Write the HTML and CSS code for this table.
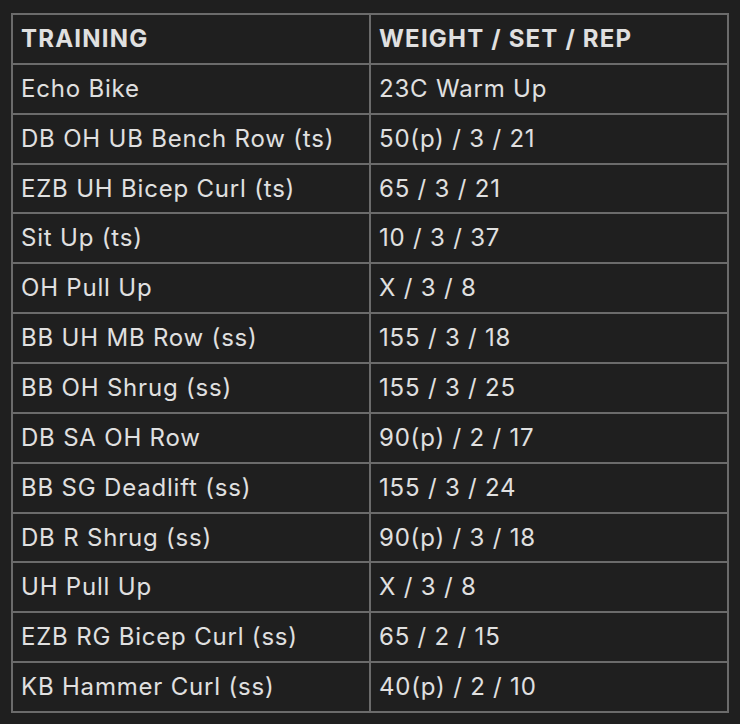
FILE: index.html
```html
<!DOCTYPE html>
<html lang="en">
<head>
<meta charset="utf-8">
<title>Training</title>
<link rel="stylesheet" href="styles.css">
</head>
<body>
<table class="plan">
  <thead>
    <tr><th>TRAINING</th><th>WEIGHT / SET / REP</th></tr>
  </thead>
  <tbody>
    <tr><td>Echo Bike</td><td>23C Warm Up</td></tr>
    <tr><td>DB OH UB Bench Row (ts)</td><td>50(p) / 3 / 21</td></tr>
    <tr><td>EZB UH Bicep Curl (ts)</td><td>65 / 3 / 21</td></tr>
    <tr><td>Sit Up (ts)</td><td>10 / 3 / 37</td></tr>
    <tr><td>OH Pull Up</td><td>X / 3 / 8</td></tr>
    <tr><td>BB UH MB Row (ss)</td><td>155 / 3 / 18</td></tr>
    <tr><td>BB OH Shrug (ss)</td><td>155 / 3 / 25</td></tr>
    <tr><td>DB SA OH Row</td><td>90(p) / 2 / 17</td></tr>
    <tr><td>BB SG Deadlift (ss)</td><td>155 / 3 / 24</td></tr>
    <tr><td>DB R Shrug (ss)</td><td>90(p) / 3 / 18</td></tr>
    <tr><td>UH Pull Up</td><td>X / 3 / 8</td></tr>
    <tr><td>EZB RG Bicep Curl (ss)</td><td>65 / 2 / 15</td></tr>
    <tr><td>KB Hammer Curl (ss)</td><td>40(p) / 2 / 10</td></tr>
  </tbody>
</table>
</body>
</html>
```

FILE: styles.css
```css
html, body {
  margin: 0;
  padding: 0;
  background: #1f1f1f;
}
body {
  padding: 13px 11px 0 11px;
  font-family: Inter, "Noto Sans", sans-serif;
  color: #e0e0e0;
}
.plan {
  width: 718px;
  table-layout: fixed;
  border-collapse: collapse;
  font-size: 24px;
}
.plan th,
.plan td {
  border: 2px solid #6b6b6b;
  padding: 6px 8px;
  line-height: 35.857px;
  text-align: left;
  white-space: nowrap;
  vertical-align: middle;
}
.plan th {
  font-weight: 700;
  letter-spacing: 1.2px;
}
.plan td {
  font-weight: 400;
  letter-spacing: 0.8px;
}
```
